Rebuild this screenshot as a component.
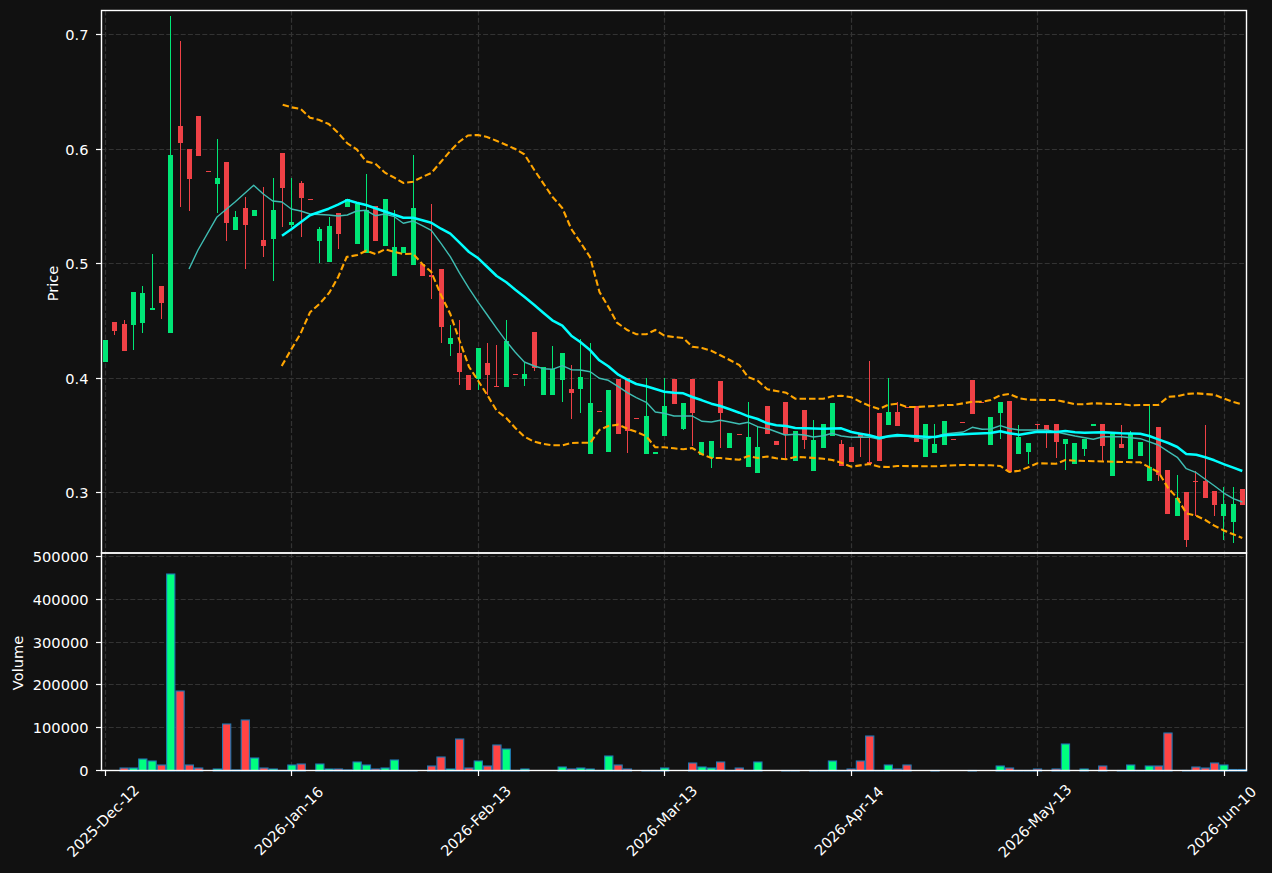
const L = 101.5, R = 1246.5, T = 10.5, MID = 553, B = 770.5;
const X = (i) => 105.5 + 9.32 * i;

// [colour, bodyTop, bodyBottom, wickTop, wickBottom]
const candles = [
  ["g",340,362],["r",322,331,322,335],["r",324,351,320,351],["g",292,325,292,350],["g",293,323,286,333],
  ["g",308,310,254,310],["r",286,303,286,319],["g",155,333,16,333],["r",126,143,41,207],["r",149,179,149,211],
  ["r",116,156],["r",171,172],["g",178,184,139,213],["r",162,223,162,241],["g",217,230,211,230],
  ["r",208,225,197,269],["g",210,216],["r",240,246,187,257],["g",210,239,178,281],["r",153,188,153,227],
  ["g",222,225,178,227],["r",183,198,181,237],["r",199,200],["g",229,241,227,263],["g",226,262,217,262],
  ["r",213,234,213,249],["g",199,207],["g",204,244],["g",210,253,174,253],["r",206,241],
  ["g",199,246],["g",247,276,210,276],["g",247,253],["g",208,265,155,265],["r",264,276],
  ["r",275,277,204,299],["r",269,327,269,343],["g",338,344,325,356],["r",353,372,320,385],["r",375,390],
  ["g",348,379,348,390],["r",363,375,343,395],["r",386,387,345,387],["g",341,387,320,387],["r",374,375],
  ["g",374,379,363,386],["r",332,368,332,371],["g",367,395],["g",369,395,346,395],["g",353,380,353,402],
  ["r",389,393,365,419],["g",377,389,339,413],["g",403,454,343,454],["r",411,412],["g",390,452],
  ["r",379,434],["r",378,431,378,453],["r",418,419],["g",416,454,378,454],["g",452,454],
  ["g",406,436,378,436],["r",379,404],["g",403,429,403,430],["r",379,413,379,446],["g",442,455],
  ["g",441,458,441,468],["r",381,413,381,448],["g",433,448],["r",434,435],["g",437,467,402,467],
  ["g",447,473,427,473],["r",406,434],["r",441,445],["r",402,434,402,460],["g",431,461],
  ["r",410,440,410,449],["g",440,471,420,471],["g",424,448],["g",403,436],["r",444,466,440,466],
  ["r",447,462],["r",434,437,434,457],["r",462,464,361,464],["r",413,461],["g",412,425,378,425],
  ["r",412,426,402,426],["r",407,408],["r",406,442],["g",424,457],["g",444,453,424,453],
  ["g",421,445],["r",439,440],["r",422,423],["r",380,414],["r",402,403],
  ["g",417,445],["g",402,413,402,439],["r",401,472],["g",437,454,425,454],["g",443,452,443,464],
  ["r",424,425,424,432],["r",425,430,425,448],["r",424,442,424,458],["g",439,444,439,470],["g",443,464],
  ["g",439,449,439,456],["g",424,426],["r",424,446,424,461],["g",434,476],["r",444,448,425,448],
  ["g",433,459,431,459],["g",442,456],["g",467,481,404,481],["r",427,475,427,481],["r",470,514],
  ["g",498,516,475,516],["r",492,540,492,547],["r",481,482,471,516],["r",481,498,425,498],["r",491,505,491,516],
  ["g",504,516,487,540],["g",504,522,487,543],["r",489,505],
];

// index -> bar height in px above the volume baseline
const vol = {
  2:3,3:3,4:12,5:10,6:6,7:197,8:80,9:6,10:3,12:2,13:47,14:1,15:51,16:13,17:3,18:2,19:.5,20:6,21:7,23:7,24:2,25:2,26:1,
  27:9,28:6,29:2,30:3,31:11,32:.5,33:.5,35:5,36:14,37:2,38:32,39:3,40:10,41:5,42:26,43:22,44:.5,45:2,49:4,50:2,51:3,52:2,53:.5,
  54:15,55:6,56:2,58:.5,59:.5,60:3,63:8,64:4,65:3,66:9,67:.5,68:3,69:.5,70:9,73:.5,74:.5,76:.5,77:.5,78:10,79:.5,80:2,81:10,82:35,83:.5,
  84:6,85:2,86:6,89:.5,93:.5,96:5,97:3,98:.5,99:.5,100:2,102:2,103:27,105:2,107:5,109:.5,110:6,111:.5,112:5,113:5,114:38,116:.5,
  117:4,118:3,119:8,120:6,121:1.5,122:1.5,
};

const thin = "189,269 198,250 216.7,217.3 235,202 253.7,185.3 263.3,194 272.7,201 282,202 291.3,209 300.7,211 310,214 328.7,215 338,216 347.3,215 356.7,211 366,210.3 375.3,215.7 384.7,214 394.3,216.7 403.3,223.3 413,221 422.3,225.7 431.3,230.3 441,243.3 450.3,256.7 459.3,272.7 469,288.3 478.3,302.3 487.3,315 496.7,328.3 506.3,341.3 515.3,352.3 524.3,362 534.3,366 543.3,368.7 552.3,369.3 562.3,365.7 571.3,369.7 580.3,370 590.3,371.7 599.3,378.3 608.3,380.3 618.3,386.7 627.3,392.7 636.3,397.7 646.3,402.3 655.3,412 664.3,413.3 674,416 683.3,416 692.3,416 702,421.3 711.3,422 720.3,420.3 729.7,422 739.3,424 748.3,422.3 757.7,426.7 770,429.5 785,435 795.3,434.3 804.3,435 813.3,437 823.3,435.7 832.3,433.3 841.3,436 851.3,437.3 869.3,437 879.3,439.3 888.3,436.7 906.7,436 925.3,439.3 944.3,434 963.3,432 972.3,427.3 982,429.3 990.7,429 1000.3,425.7 1009.3,428.5 1019.3,430 1037.3,430 1046.7,430 1056.3,432 1075,436 1093.3,439.3 1103,436.7 1121.3,436.7 1140.3,438.7 1158.3,445 1168.3,451.7 1177.3,457.3 1186.3,468.7 1196.3,472.7 1205.3,479.3 1214.3,485.7 1224.3,493.3 1233.3,498.7 1242.3,502";
const thick = "282,235.7 291.3,229.3 300.7,222.3 310,215.3 319.3,212 328.7,208.7 338,204.7 347.3,200 356.7,202.7 366,205 375.3,208.3 390,213.3 403.3,217.7 413,217.7 422.3,220.3 431.3,222.7 441,228.7 450.3,233.7 459.3,242.3 469,252 478.3,258.3 487.3,267 496.7,276 506.3,282.3 515.3,289.7 524.3,296.7 534.3,305 543.3,312.7 552.3,320.3 562.3,325.7 571.3,335.7 580.3,342 590.3,350.3 599.3,360.3 608.3,366.3 618.3,374.7 627.3,379.7 636.3,384 646.3,386.3 655.3,389 664.3,391.7 674,392.7 683.3,393.3 692.3,397 702,400.3 711.3,403.7 720.3,406 729.7,409.3 739.3,412.7 748.3,416.3 757.7,419 767.3,423.3 776.3,425.3 786,426 795.3,428 804.3,428.3 823.3,428.7 841.3,428.3 851.3,432 860.3,433.7 869.3,435.3 879.3,438 888.3,436.3 897.3,435 907,435.7 925.3,436.7 935.3,437 944.3,435.3 953.3,434.7 972.3,433.7 990.7,433 1000.3,431.3 1009.3,433.2 1019.3,434.7 1028.3,433.3 1037.3,431.7 1056.3,432 1065.3,431 1075,432.3 1084.3,432.7 1103,432.3 1121.3,433.3 1140.3,433.7 1149.3,436 1158.3,439.3 1168.3,443 1177.3,447 1186.3,454 1196.3,454.7 1205.3,457.3 1214.3,460.3 1224.3,464.3 1233.3,467.7 1242.3,471";
const upper = "282.7,104.7 291.3,107.3 300.7,109 310,117.7 319.3,120 328.7,124 338,132.7 347.3,143.3 356.7,149.3 366,161.3 375.3,163.7 385,172.7 394.3,177.7 403.3,183 413,181.7 422.3,177 431.3,173 441,161.7 450.3,151 459.3,141.7 468,135.5 478,135 487,137 497,141 506.3,145 515.3,149 524.3,154.3 534.3,170 543.3,183.3 552.3,196.7 562.3,208 571.3,229 580,241.7 590,257 599.5,292 609,308 617,322.7 627.3,330 636.3,334.3 646.3,334.3 655.3,330 664.3,335.7 674,337 683.3,338 692.3,346.7 702,348 711.3,350.7 720.3,355.3 729.7,360 739.3,365 748.3,377.3 757.7,380.7 767.3,389.3 776.3,391 786,392.7 795.3,398.7 804.3,398.7 823.3,398.7 832.3,396.3 841.3,395.7 851.3,397.3 860.3,401.7 869.3,405.7 879.3,409 888.3,404.7 897.3,403.7 907,407 916.3,407 935.3,406 944.3,405 953.3,405 963.3,403.3 972.3,401.7 982,401.7 990.7,400 1000.3,395.3 1009.3,394 1019.3,398.3 1028.3,399.7 1046.7,400 1056.3,400 1065.3,402 1075,404.3 1084.3,404.3 1093.3,403.3 1112.3,404 1121.3,404 1130.3,405.3 1140.3,405 1158.3,405 1168.3,396.7 1177.3,396.3 1186.3,394 1196.3,393.3 1214.3,394.7 1224.3,398.7 1233.3,402 1242.3,404.3";
const lower = "281.7,366 291.3,349.3 300.7,333.3 310,312.3 319.3,304 329.3,292.7 338.3,276.7 346.7,257 357.3,255 366.3,250.7 375.7,254 385,249.3 394.3,252 403.3,254 413,253.7 422.3,264 431.3,272 441,295 450.3,314 459.3,340 469,366.7 478.3,381 487.3,395 496.7,410.7 506.3,418 515.3,428 524.3,436.7 533.3,441.3 542.3,443.7 552.3,445.3 562.3,445.3 571.3,443 580.3,442.7 590.3,442.7 599.3,430 608.3,426 618.3,424.7 627.3,428.7 636.3,431.7 646.3,436.3 655.3,447.3 664.3,447.3 674,448.3 683.3,449.3 692.3,448 702,454.3 711.3,458 720.3,458 729.7,459 739.3,459.7 748.3,456 757.7,458 767.3,456.5 776.3,458.3 786,459.3 795.3,457 804.3,457.3 823.3,458.7 832.3,460 841.3,462.7 851.3,466.7 869.3,464 879.3,466.7 888.3,467 897.3,466 935.3,466.3 944.3,465.7 963.3,465 990.7,465.3 1000.3,466 1009.3,472 1019.3,470.7 1028.3,467.3 1037.3,463.3 1056.3,463.7 1065.3,460 1075,460.7 1112.3,461.7 1121.3,462 1140.3,462.3 1149.3,467.3 1158.3,472 1168.3,488.3 1177.3,498 1186.3,513.3 1196.3,515.7 1205.3,520 1214.3,525.7 1224.3,530.7 1233.3,534.3 1242.3,538";

const priceTicks = [["0.7",34.5],["0.6",149.5],["0.5",263.5],["0.4",378.5],["0.3",492.5]];
const volTicks = [["500000",556.5],["400000",599.5],["300000",642.5],["200000",684.5],["100000",727.5],["0",770.5]];
const dateTicks = [["2025-Dec-12",105.5],["2026-Jan-16",291.5],["2026-Feb-13",478.5],["2026-Mar-13",664.5],["2026-Apr-14",851.5],["2026-May-13",1037.5],["2026-Jun-10",1224.5]];

const GREEN = "#00e676", RED = "#ef4146";

function Chart() {
  const grid = "#333333";
  return (
    <svg width="1272" height="873" viewBox="0 0 1272 873" className="block" fontFamily="'DejaVu Sans', sans-serif" fontSize="14.6" fill="#ffffff">
      {/* grid */}
      <g stroke={grid} strokeWidth="1.2" strokeDasharray="5 2.2">
        {priceTicks.map(([t, y]) => <line key={t} x1={L} x2={R} y1={y} y2={y} />)}
        {volTicks.slice(0, 5).map(([t, y]) => <line key={t} x1={L} x2={R} y1={y} y2={y} />)}
        {dateTicks.map(([t, x]) => (
          <g key={t}>
            <line x1={x} x2={x} y1={T} y2={MID} />
            <line x1={x} x2={x} y1={MID} y2={B} />
          </g>
        ))}
      </g>

      {/* candles */}
      {candles.map(([c, top, bot, wt, wb], i) => {
        const col = c === "g" ? GREEN : RED;
        const bx = Math.round(X(i) - 2.5);
        return (
          <g key={i} fill={col} stroke="none" shapeRendering="crispEdges">
            <rect x={bx + 2} y={wt ?? top} width="1" height={(wb ?? bot) - (wt ?? top)} />
            <rect x={bx} y={top} width="5" height={Math.max(bot - top, 1)} />
          </g>
        );
      })}

      {/* overlays */}
      <polyline points={thin} fill="none" stroke="#3fbdb3" strokeWidth="1.4" strokeLinejoin="round" />
      <polyline points={upper} fill="none" stroke="#ffa500" strokeWidth="2.1" strokeDasharray="6.5 3" />
      <polyline points={lower} fill="none" stroke="#ffa500" strokeWidth="2.1" strokeDasharray="6.5 3" />
      <polyline points={thick} fill="none" stroke="#00ffff" strokeWidth="2.5" strokeLinejoin="round" />

      {/* volume */}
      {Object.entries(vol).map(([i, h]) => {
        const idx = Number(i);
        return (
          <rect key={i} x={X(idx) - 4.1} y={771 - h} width="8.2" height={h}
            fill={candles[idx][0] === "g" ? "#00ff7f" : "#ff4444"} stroke="#1f77b4" strokeWidth="1.1" />
        );
      })}

      {/* spines */}
      <rect x={L} y={T} width={R - L} height={MID - T} fill="none" stroke="#ffffff" strokeWidth="1.4" />
      <rect x={L} y={MID} width={R - L} height={B - MID} fill="none" stroke="#ffffff" strokeWidth="1.4" />

      {/* ticks */}
      <g stroke="#ffffff" strokeWidth="1.2">
        {priceTicks.concat(volTicks).map(([t, y]) => <line key={t} x1={L - 5.5} x2={L} y1={y} y2={y} />)}
        {dateTicks.map(([t, x]) => <line key={t} x1={x} x2={x} y1={B} y2={B + 5.5} />)}
      </g>

      {/* labels */}
      <g textAnchor="end">
        {priceTicks.concat(volTicks).map(([t, y]) => <text key={t} x={L - 13} y={y + 5.5}>{t}</text>)}
      </g>
      <text textAnchor="middle" transform="translate(57.5 283.5) rotate(-90)">Price</text>
      <text textAnchor="middle" transform="translate(22.5 663) rotate(-90)">Volume</text>
      {dateTicks.map(([t, x]) => (
        <text key={t} textAnchor="middle" transform={`translate(${x - 2.5} 821) rotate(-45) translate(0 5)`}>{t}</text>
      ))}
    </svg>
  );
}

export default function App() {
  return (
    <div className="w-[1272px] h-[873px] bg-[#111111] overflow-hidden">
      <Chart />
    </div>
  );
}
